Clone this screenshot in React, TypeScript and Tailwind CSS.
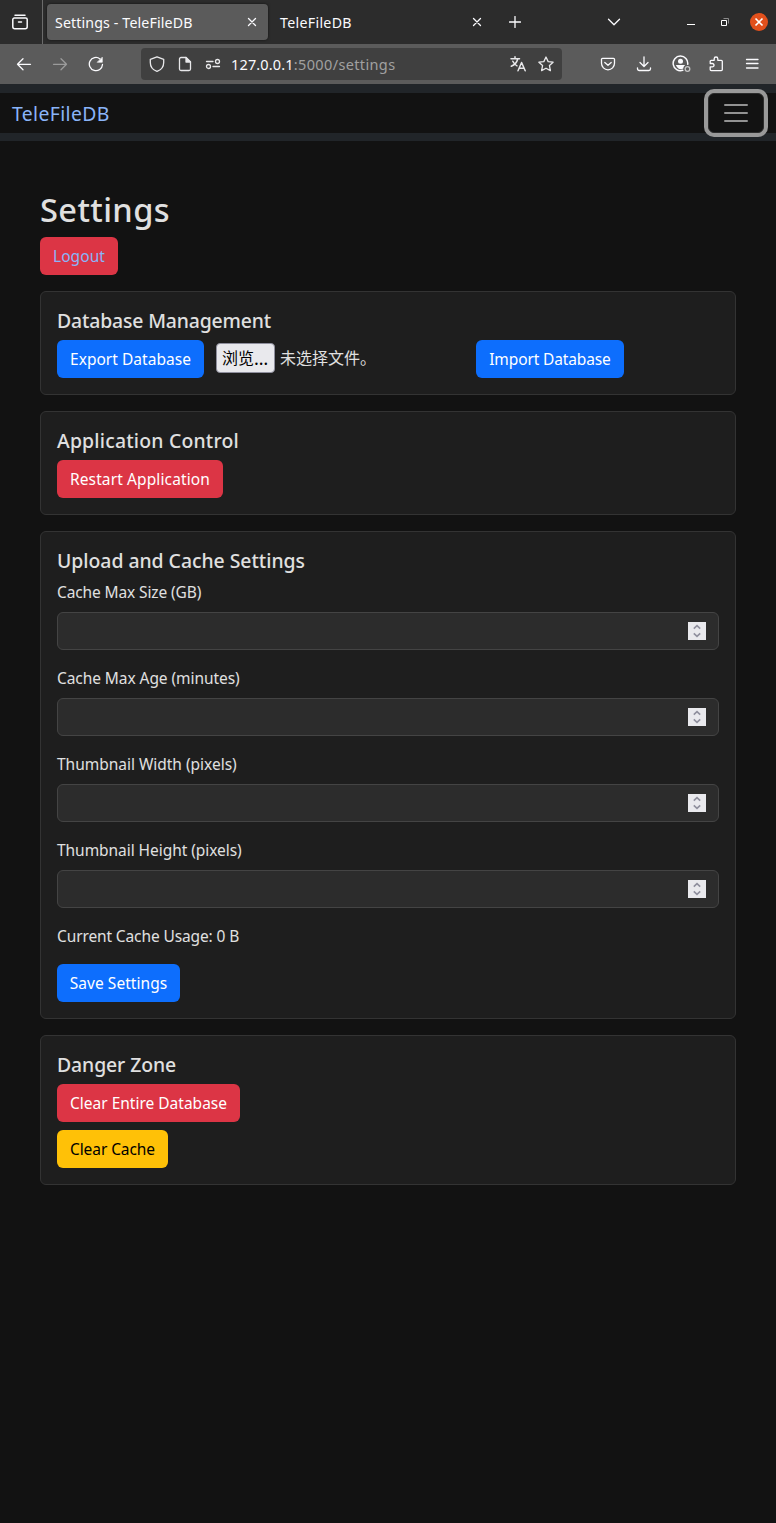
import React, { ReactNode } from 'react';

const stroke = {
  fill: 'none',
  stroke: 'currentColor',
  strokeWidth: 1.3,
  strokeLinecap: 'round',
  strokeLinejoin: 'round',
} as const;

function Icon({ children, size = 16, className = '' }: { children: ReactNode; size?: number; className?: string }) {
  return (
    <svg width={size} height={size} viewBox={`0 0 ${size} ${size}`} className={`shrink-0 ${className}`} {...stroke}>
      {children}
    </svg>
  );
}

function CloseIcon() {
  return (
    <Icon size={10}>
      <path d="M1.5 1.5l7 7M8.5 1.5l-7 7" />
    </Icon>
  );
}

function TabBar() {
  return (
    <div className="flex h-11 shrink-0 items-center bg-[#2c2c2c] text-[14.2px] text-[#fbfbfe]">
      <div className="flex h-11 w-[43px] items-center border-r border-[#6b6b6b] pl-3">
        <Icon>
          <path
            d="M3 1.2h10M.8 5.5a1.5 1.5 0 0 1 1.5-1.5h11.4a1.5 1.5 0 0 1 1.5 1.5v7.2a2 2 0 0 1-2 2H2.8a2 2 0 0 1-2-2zM6.5 8h3"
            strokeWidth="1.5"
          />
        </Icon>
      </div>
      <div className="ml-1 flex h-9 w-[221px] items-center justify-between rounded bg-[#5b5b5b] pl-2 pr-[11px] shadow-[0_0_3px_rgba(0,0,0,0.6)]">
        <span className="mt-0.5 whitespace-nowrap tracking-[0.13px]">Settings - TeleFileDB</span>
        <CloseIcon />
      </div>
      <div className="flex h-9 w-[214px] items-center justify-between pl-3">
        <span className="mt-0.5 whitespace-nowrap tracking-[0.3px]">TeleFileDB</span>
        <CloseIcon />
      </div>
      <Icon size={12} className="ml-[27px]">
        <path d="M6 .5v11M.5 6h11" />
      </Icon>
      <Icon size={14} className="ml-[86px]">
        <path d="M1.5 4.3l5.5 5.5L12.5 4.3" />
      </Icon>
      <svg width="8" height="8" className="ml-[66px] shrink-0" fill="#ffffff">
        <path d="M0 6h8v1H0z" />
      </svg>
      <svg width="9" height="9" className="ml-[26px] shrink-0" fill="none">
        <path d="M2.5 .5h5v5" stroke="#8a8a8a" />
        <path d="M.5 2.500h5v5h-5z" stroke="#ffffff" />
      </svg>
      <span className="ml-5 flex size-[18px] items-center justify-center rounded-full bg-[#e2501c]">
        <svg width="10" height="10" fill="none" stroke="#ffffff" strokeWidth="1.7">
          <path d="M1.5 1.5l7 7M8.5 1.5l-7 7" />
        </svg>
      </span>
    </div>
  );
}

function Toolbar() {
  return (
    <div className="flex h-10 shrink-0 items-center bg-[#5b5b5b] text-[#fbfbfe]">
      <Icon className="ml-4">
        <path d="M14.5 8.3H1.5M7 2.8L1.5 8.3L7 13.8" />
      </Icon>
      <Icon className="ml-5 text-[#9b9b9b]">
        <path d="M1.5 8.3h13M9 2.8L14.5 8.3L9 13.8" />
      </Icon>
      <Icon className="ml-5">
        <path d="M14.5 8.5A6.6 6.6 0 1 1 12 2.9" />
        <path d="M14.3 1.5v4.8H9.5z" fill="currentColor" strokeWidth=".6" />
      </Icon>
      <div className="ml-[37px] flex h-8 w-[421px] items-center rounded bg-[#404040] pl-2 text-[#e8e8ea]">
        <Icon>
          <path d="M8 .8L14.7 3.3V6.5C14.7 11 12 14 8 15.4C4 14 1.3 11 1.3 6.5V3.3z" />
        </Icon>
        <Icon className="ml-3">
          <path d="M9 1.5H4A1.5 1.5 0 0 0 2.5 3v10A1.5 1.5 0 0 0 4 14.5h8A1.5 1.5 0 0 0 13.5 13V6z" />
          <path d="M9 1.5L13.5 6H9z" fill="currentColor" />
        </Icon>
        <Icon className="ml-3">
          <circle cx="12.5" cy="5.5" r="2" />
          <circle cx="3.5" cy="10.5" r="2" />
          <path d="M1.5 5.500H8M8 10.500h6.500" />
        </Icon>
        <span className="ml-[10px] mt-0.5 whitespace-nowrap text-[14.5px] tracking-[0.15px] text-[#fbfbfe]">
          127.0.0.1<span className="tracking-[0.36px] text-[#a0a0a0]">:5000/settings</span>
        </span>
        <Icon className="ml-auto mr-3">
          <path d="M1 2.8h8.5M5 .8v2M7.7 3C7 6 4.5 9 1.3 10.2M2.8 5.2C4 7.8 5.5 9 7 9.8" strokeWidth="1.5" />
          <path d="M8 14.8l3.600-8.300L15.200 14.800M9.300 12.200h4.600" strokeWidth="1.5" />
        </Icon>
        <Icon className="mr-2">
          <path d="M8 1l2.150 4.600 4.950.6-3.650 3.400.95 5L8 12.200 3.600 14.600l.95-5L.9 6.200l4.950-.6z" />
        </Icon>
      </div>
      <Icon className="ml-[38px]">
        <path d="M2.500 2.300h11a1 1 0 0 1 1 1v4a6.500 6.500 0 0 1-13 0v-4a1 1 0 0 1 1-1zM4.800 6.500L8 9.300l3.200-2.800" />
      </Icon>
      <Icon className="ml-5">
        <path d="M8 .8v9.500M4 6.500l4 4 4-4M1.500 11.800v1a1.700 1.700 0 0 0 1.700 1.700h9.600a1.700 1.700 0 0 0 1.700-1.700v-1" />
      </Icon>
      <Icon size={20} className="ml-5">
        <path d="M15.700 10.300A7.300 7.300 0 1 0 10.700 16.300" strokeWidth="1.5" />
        <circle cx="8.500" cy="7.300" r="2.500" fill="currentColor" stroke="none" />
        <path d="M3.800 11h9.400c-1 .8-1.900 2-1.900 3.500C8.500 16.200 5.500 14.800 3.800 11z" fill="currentColor" stroke="none" />
        <circle cx="15.500" cy="15" r="2.300" stroke="#c4c4c4" strokeWidth="1.3" />
      </Icon>
      <Icon className="ml-4">
        <path d="M2.200 6.500V5.300a1 1 0 0 1 1-1H6.200V2.800a1.800 1.800 0 0 1 3.600 0v1.500h3.500a1 1 0 0 1 1 1v8.300a1 1 0 0 1-1 1H3.200a1 1 0 0 1-1-1v-2.700h2.100a1.700 1.700 0 0 0 0-3.400H2.200" />
      </Icon>
      <Icon size={14} className="ml-[21px]">
        <path d="M1.500 2.500h11.500M1.500 6.500h11.500M1.500 11h11.500" />
      </Icon>
    </div>
  );
}

function Navbar() {
  return (
    <div className="shrink-0 bg-[#212529] pb-2 pt-[9px]">
      <nav className="flex h-10 items-center justify-between bg-[#121212] px-3">
        <a className="mt-0.5 whitespace-nowrap text-[19.4px] leading-[30px] tracking-[0.37px] text-[#8ab4f8]">TeleFileDB</a>
        <button
          aria-label="Toggle navigation"
          className="flex h-10 w-14 items-center justify-center rounded-md border border-[#2c2c2c] bg-[#121212] text-[#929292] shadow-[0_0_0_4px_#999999]"
        >
          <svg width="24" height="20" fill="none" stroke="currentColor" strokeWidth="2" strokeLinecap="round">
            <path d="M1 2h22M1 10h22M1 18h22" />
          </svg>
        </button>
      </nav>
    </div>
  );
}

function Button({ children, className }: { children: ReactNode; className: string }) {
  return (
    <button className={`flex h-[38px] shrink-0 items-center justify-center whitespace-nowrap rounded-md pt-0.5 text-[15.5px] ${className}`}>
      <span>{children}</span>
    </button>
  );
}

function Card({ title, titleClass, children }: { title: string; titleClass: string; children: ReactNode }) {
  return (
    <section className="mb-4 rounded-md border border-[#333333] bg-[#1e1e1e] p-4">
      <h5 className={`mb-[7px] whitespace-nowrap pt-px text-[19.4px] font-medium leading-6 ${titleClass}`}>
        {title}
      </h5>
      {children}
    </section>
  );
}

function NumberField({ label, labelClass }: { label: string; labelClass: string }) {
  return (
    <div className="mb-4">
      <label className={`mb-2 block whitespace-nowrap text-[15.5px] leading-6 ${labelClass}`}>{label}</label>
      <div className="flex h-[38px] items-center justify-end rounded-md border border-[#444444] bg-[#2c2c2c] pr-3">
        <span className="flex size-[18px] items-center justify-center bg-[#e9e9ed]">
          <svg width="18" height="18" fill="none" stroke="#8f8f9d" strokeWidth="1.6">
            <path d="M5.800 6.600L9 3.600l3.200 3M5.800 11.400L9 14.400l3.200-3" />
          </svg>
        </span>
      </div>
    </div>
  );
}

export default function App() {
  return (
    <div className="flex min-h-[1523px] flex-col bg-[#121212] font-['Noto_Sans','Noto_Sans_CJK_SC',sans-serif] text-[#e0e0e0]">
      <TabBar />
      <Toolbar />
      <Navbar />
      <main className="px-10 pt-12">
        <h1 className="mb-2 h-10 whitespace-nowrap text-[32.6px] font-medium leading-[41px] tracking-[0.4px]">Settings</h1>
        <Button className="mb-4 w-[78px] bg-[#dc3545] tracking-[0.07px] text-[#8ab4f8]">Logout</Button>

        <Card title="Database Management" titleClass="tracking-[-0.151px]">
          <div className="flex">
            <Button className="w-[147px] bg-[#0d6efd] tracking-[0.037px] text-white">Export Database</Button>
            <div className="ml-3 flex h-[38px] w-[260px] items-start pt-[3px] text-[16px]">
              <button className="flex h-[30px] w-[59px] items-start whitespace-nowrap rounded border border-[#8f8f9d] bg-[#e9e9ed] pl-[5px] leading-[29px] text-black">
                浏览<span className="text-[18px]">…</span>
              </button>
              <span className="ml-[5px] whitespace-nowrap leading-[31px]">未选择文件。</span>
            </div>
            <Button className="w-[148px] bg-[#0d6efd] tracking-[-0.125px] text-white">Import Database</Button>
          </div>
        </Card>

        <Card title="Application Control" titleClass="tracking-[0.201px]">
          <Button className="w-[166px] bg-[#dc3545] tracking-[0.117px] text-white">Restart Application</Button>
        </Card>

        <Card title="Upload and Cache Settings" titleClass="tracking-[-0.025px]">
          <NumberField label="Cache Max Size (GB)" labelClass="tracking-[-0.12px]" />
          <NumberField label="Cache Max Age (minutes)" labelClass="tracking-[-0.07px]" />
          <NumberField label="Thumbnail Width (pixels)" labelClass="tracking-[-0.02px]" />
          <NumberField label="Thumbnail Height (pixels)" labelClass="tracking-[-0.05px]" />
          <p className="mb-4 whitespace-nowrap text-[15.5px] leading-6 tracking-[-0.12px]">Current Cache Usage: 0 B</p>
          <Button className="w-[123px] bg-[#0d6efd] tracking-[0.052px] text-white">Save Settings</Button>
        </Card>

        <Card title="Danger Zone" titleClass="tracking-[-0.099px]">
          <Button className="mb-2 w-[183px] bg-[#dc3545] text-white">Clear Entire Database</Button>
          <Button className="w-[111px] bg-[#ffc107] tracking-[-0.083px] text-black">Clear Cache</Button>
        </Card>
      </main>
    </div>
  );
}
